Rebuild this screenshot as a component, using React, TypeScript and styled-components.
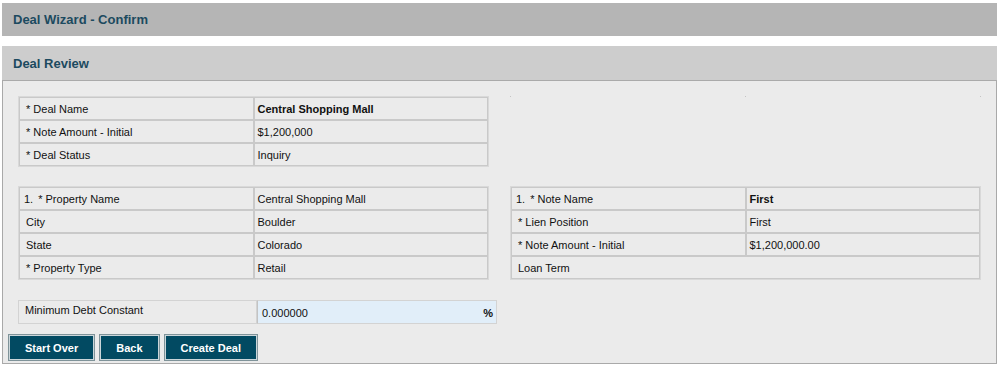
import React from "react";
import styled, { createGlobalStyle } from "styled-components";

const GlobalStyle = createGlobalStyle`
	body {
		margin: 0;
		background: #ffffff;
		font-family: "Liberation Sans", Arial, sans-serif;
	}
`;

const Page = styled.div`
	padding: 3px 3px 0 2px;
	display: flex;
	flex-direction: column;
	gap: 10px;
`;

const WizardBar = styled.div`
	background: #b5b5b5;
	height: 33px;
	display: flex;
	align-items: center;
	padding-left: 11px;
`;

const Title = styled.h1`
	margin: 0;
	font-size: 13px;
	font-weight: bold;
	color: #1c4a5f;
`;

const Panel = styled.section`
	display: flex;
	flex-direction: column;
`;

const PanelHeader = styled.div`
	background: #cdcdcd;
	height: 34px;
	border-bottom: 1px solid #aaaaaa;
	display: flex;
	align-items: center;
	padding-left: 11px;
`;

const PanelBody = styled.div`
	background: #ebebeb;
	border: 1px solid #a9a9a9;
	border-top: none;
	padding: 15px 15px 2px 15px;
`;

const Grid = styled.div`
	display: grid;
	grid-template-columns: 1fr 1fr;
	column-gap: 21px;
	row-gap: 19px;
`;

const Table = styled.table`
	width: 100%;
	border-collapse: separate;
	border-spacing: 0;
	border: 1px solid #d9d9d9;
	table-layout: fixed;
	font-size: 11px;
	color: #111111;
`;

const Cell = styled.td<{ $bold?: boolean; $value?: boolean }>`
	height: 21px;
	padding: 0 ${p => (p.$value ? "3px" : "6px")};
	border: 1px solid #c9c9c9;
	font-weight: ${p => (p.$bold ? "bold" : "normal")};
	vertical-align: middle;
	white-space: nowrap;
`;

const Num = styled.span`
	margin-left: -2px;
	margin-right: 5px;
`;

const Dots = styled.div`
	height: 1px;
	display: flex;
	justify-content: space-between;
	align-self: start;

	span {
		width: 1px;
		height: 1px;
		background: #c4c4c4;
	}
`;

const DebtRow = styled.div`
	display: grid;
	grid-template-columns: 239px 240px;
	height: 24px;
	margin-top: 20px;
	font-size: 11px;
	color: #111111;
`;

const DebtLabel = styled.div`
	border: 1px solid #d3d3d3;
	padding: 3px 6px 0;
`;

const DebtInput = styled.div`
	background: #e1eef9;
	border: 1px solid #d3d3d3;
	border-left: 1px solid #c3c3c3;
	display: flex;
	align-items: center;
	justify-content: space-between;
	padding: 2px 3px 0 4px;

	b {
		font-weight: bold;
	}
`;

const Actions = styled.div`
	display: flex;
	gap: 4px;
	margin: 10px 0 0 -10px;
`;

const Button = styled.button`
	height: 27px;
	padding: 0 16px;
	background: #024a62;
	color: #ffffff;
	border: 1px solid #7f9399;
	box-shadow: inset 0 0 0 1px #cbd6da;
	font-family: "Liberation Sans", Arial, sans-serif;
	font-size: 11px;
	font-weight: bold;
	cursor: pointer;
`;

type Row = { label: React.ReactNode; value?: string; bold?: boolean };

const dealRows: Row[] = [
	{ label: "* Deal Name", value: "Central Shopping Mall", bold: true },
	{ label: "* Note Amount - Initial", value: "$1,200,000" },
	{ label: "* Deal Status", value: "Inquiry" },
];

const propertyRows: Row[] = [
	{ label: <><Num>1.</Num>* Property Name</>, value: "Central Shopping Mall" },
	{ label: "City", value: "Boulder" },
	{ label: "State", value: "Colorado" },
	{ label: "* Property Type", value: "Retail" },
];

const noteRows: Row[] = [
	{ label: <><Num>1.</Num>* Note Name</>, value: "First", bold: true },
	{ label: "* Lien Position", value: "First" },
	{ label: "* Note Amount - Initial", value: "$1,200,000.00" },
	{ label: "Loan Term" },
];

const ReviewTable = ({ rows }: { rows: Row[] }) => (
	<Table>
		<tbody>
			{rows.map((row, i) => (
				<tr key={i}>
					{row.value === undefined ? (
						<Cell colSpan={2}>{row.label}</Cell>
					) : (
						<>
							<Cell>{row.label}</Cell>
							<Cell $value $bold={row.bold}>
								{row.value}
							</Cell>
						</>
					)}
				</tr>
			))}
		</tbody>
	</Table>
);

const App = () => {
	return (
		<>
			<GlobalStyle />
			<Page>
				<WizardBar>
					<Title>Deal Wizard - Confirm</Title>
				</WizardBar>
				<Panel>
					<PanelHeader>
						<Title>Deal Review</Title>
					</PanelHeader>
					<PanelBody>
						<Grid>
							<ReviewTable rows={dealRows} />
							<Dots>
								<span />
								<span />
								<span />
							</Dots>
							<ReviewTable rows={propertyRows} />
							<ReviewTable rows={noteRows} />
						</Grid>
						<DebtRow>
							<DebtLabel>Minimum Debt Constant</DebtLabel>
							<DebtInput>
								<span>0.000000</span>
								<b>%</b>
							</DebtInput>
						</DebtRow>
						<Actions>
							<Button>Start Over</Button>
							<Button>Back</Button>
							<Button>Create Deal</Button>
						</Actions>
					</PanelBody>
				</Panel>
			</Page>
		</>
	);
};

export default App;
